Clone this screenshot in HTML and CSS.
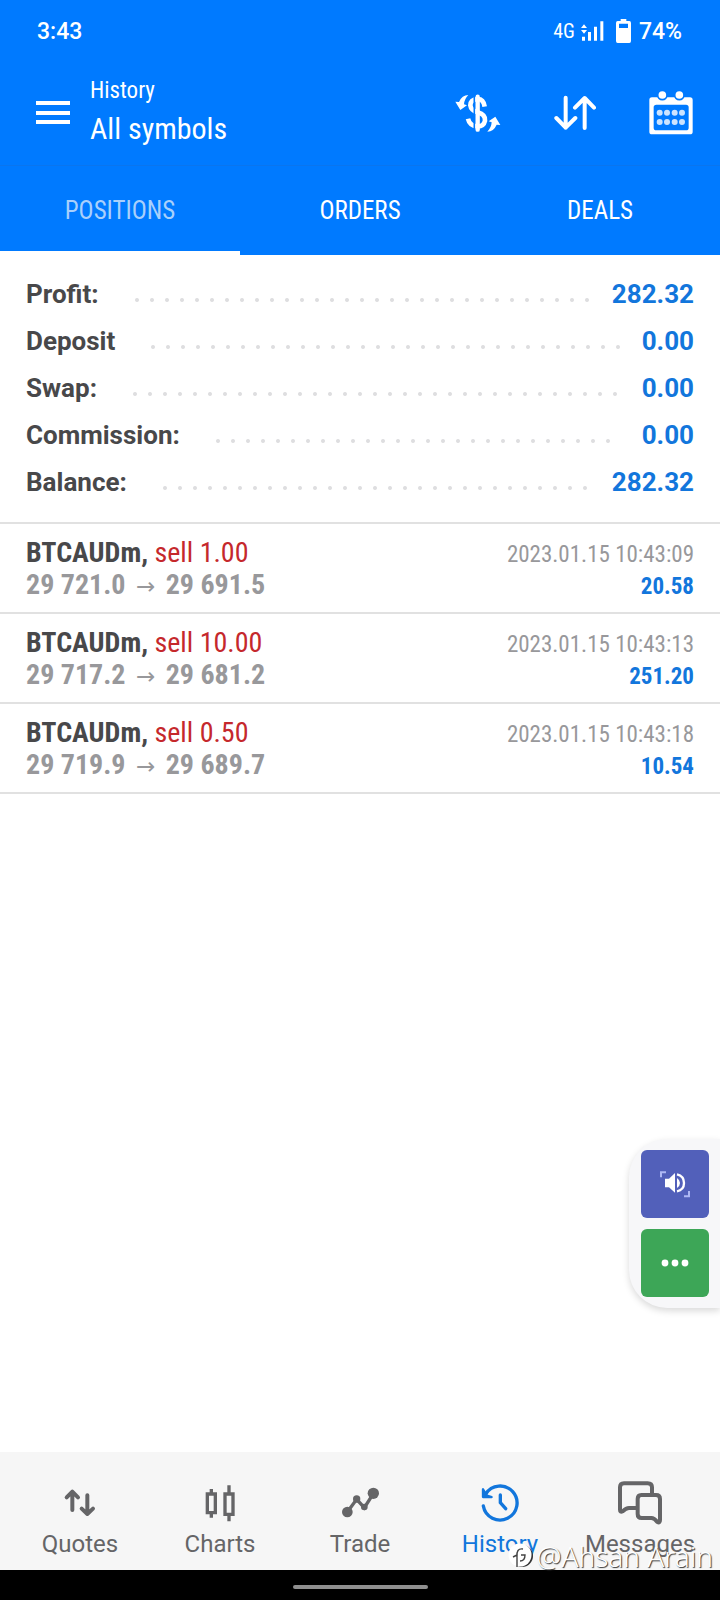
FILE: index.html
```html
<!DOCTYPE html>
<html lang="en">
<head>
<meta charset="utf-8">
<meta name="viewport" content="width=device-width, initial-scale=1">
<title>History</title>
<link rel="stylesheet" href="styles.css">
</head>
<body>
<div class="app">
  <header class="top">
    <div class="status">
      <span class="clock">3:43</span>
      <span class="network">4G</span>
      <svg class="signal" width="23" height="20" viewBox="666 59 69 60" fill="currentColor"><path d="M675 69l9 11h-18zM675 97l9-11h-18zM669 106h9v12h-9zM687 92h9v26h-9zM705 76h9v42h-9zM724 60h9v58h-9z"/></svg>
      <svg class="battery" width="15" height="24" viewBox="768 54 45 72"><path fill="currentColor" fill-rule="evenodd" d="M782 54h17v6h9q5 0 5 6v54q0 6-5 6h-35q-5 0-5-6V66q0-6 5-6h9zM777 68v13h27V68z"/></svg>
      <span class="percent">74%</span>
    </div>
    <div class="bar">
      <button class="icon-button menu" aria-label="Menu"><svg width="34" height="24" viewBox="0 0 34 24" fill="currentColor"><path d="M0 0h34v4H0zM0 10h34v4H0zM0 19h34v4H0z"/></svg></button>
      <div class="heading">
        <p class="section">History</p>
        <h1 class="filter">All symbols</h1>
      </div>
      <div class="actions">
        <button class="icon-button" aria-label="Currency">
          <svg width="46" height="38" viewBox="284 280 138 114"><g fill="none" stroke="currentColor"><path stroke-width="14" d="M373 318Q370 295 352 295Q330 297 330 314Q332 330 352 335Q376 342 374 360Q370 377 352 377Q328 376 323 354"/><path class="cut" stroke-width="5" d="M342 284V390"/><path stroke-width="13" stroke-linecap="round" d="M352 288V387"/></g><path fill="currentColor" d="M285 303L296 304Q305 283 324 283Q312 295 311 311L320 314L300 328ZM420 373L409 372Q400 393 381 393Q393 381 394 365L385 362L405 348Z"/></svg>
        </button>
        <button class="icon-button" aria-label="Sort">
          <svg width="42" height="36" viewBox="580 284 126 108" fill="none" stroke="currentColor" stroke-width="12" stroke-linecap="round" stroke-linejoin="round"><path d="M615 292V382M587 353L615 382L644 353M672 383V293M643 322L672 293L700 322"/></svg>
        </button>
        <button class="icon-button" aria-label="Select period">
          <svg width="44" height="44" viewBox="866 269 132 132" fill="currentColor"><path fill-rule="evenodd" d="M875 288H989Q997 288 997 296V391Q997 399 989 399H875Q867 399 867 391V296Q867 288 875 288ZM888 310Q880 310 880 318V379Q880 387 888 387H977Q985 387 985 379V318Q985 310 977 310Z"/><g class="rings"><circle cx="906" cy="281" r="14"/><circle cx="957" cy="281" r="14"/></g><g class="days"><circle cx="898" cy="334" r="9"/><circle cx="920" cy="334" r="9"/><circle cx="943" cy="334" r="9"/><circle cx="965" cy="334" r="9"/><circle cx="898" cy="362" r="9"/><circle cx="920" cy="362" r="9"/><circle cx="943" cy="362" r="9"/><circle cx="965" cy="362" r="9"/></g></svg>
        </button>
      </div>
    </div>
    <nav class="tabs">
      <button class="tab current" aria-current="true">POSITIONS</button>
      <button class="tab">ORDERS</button>
      <button class="tab">DEALS</button>
    </nav>
  </header>

  <main class="content">
    <dl class="summary">
      <div class="total"><dt>Profit:</dt><dd>282.32</dd></div>
      <div class="total"><dt>Deposit</dt><dd>0.00</dd></div>
      <div class="total"><dt>Swap:</dt><dd>0.00</dd></div>
      <div class="total"><dt>Commission:</dt><dd>0.00</dd></div>
      <div class="total"><dt>Balance:</dt><dd>282.32</dd></div>
    </dl>
    <ul class="positions">
      <li class="position">
        <div class="line"><span class="symbol">BTCAUDm, <span class="side">sell 1.00</span></span><time class="time">2023.01.15 10:43:09</time></div>
        <div class="line"><span class="prices">29 721.0 <span class="arrow">→</span> 29 691.5</span><span class="profit">20.58</span></div>
      </li>
      <li class="position">
        <div class="line"><span class="symbol">BTCAUDm, <span class="side">sell 10.00</span></span><time class="time">2023.01.15 10:43:13</time></div>
        <div class="line"><span class="prices">29 717.2 <span class="arrow">→</span> 29 681.2</span><span class="profit">251.20</span></div>
      </li>
      <li class="position">
        <div class="line"><span class="symbol">BTCAUDm, <span class="side">sell 0.50</span></span><time class="time">2023.01.15 10:43:18</time></div>
        <div class="line"><span class="prices">29 719.9 <span class="arrow">→</span> 29 689.7</span><span class="profit">10.54</span></div>
      </li>
    </ul>
  </main>

  <aside class="floating">
    <button class="tool sound" aria-label="Sound"><svg width="30" height="28" viewBox="180 149 90 84"><path class="corners" d="M183 171V156H198M252 228H267V212"/><path fill="#fff" d="M195 175H207L225 158V217L207 201H195ZM231 173Q240 179 240 188T231 203Z"/><path fill="none" stroke="#fff" stroke-width="7" d="M231 162Q252 167 252 188T231 213"/></svg></button>
    <button class="tool more" aria-label="More"><svg width="28" height="8" viewBox="0 0 28 8" fill="#fff"><circle cx="4" cy="4" r="3.4"/><circle cx="14" cy="4" r="3.4"/><circle cx="24" cy="4" r="3.4"/></svg></button>
  </aside>

  <footer class="bottom">
    <nav class="nav">
      <a class="item" href="#quotes"><svg width="44" height="44" viewBox="176 122 132 132" fill="none" stroke="currentColor" stroke-width="12" stroke-linecap="round" stroke-linejoin="round"><path d="M219 209V154M202 171L219 154L236 171M264 165V221M247 205L264 221L281 205"/></svg>Quotes</a>
      <a class="item" href="#charts"><svg width="44" height="44" viewBox="595 122 132 132" fill="none" stroke="currentColor" stroke-width="10"><path d="M623 161H647V217H623ZM635 146V158M635 220V232M676 161H700V222H676ZM688 135V158M688 225V243"/></svg>Charts</a>
      <a class="item" href="#trade"><svg width="44" height="44" viewBox="1014 122 132 132"><path fill="none" stroke="currentColor" stroke-width="10" d="M1042 215L1070 177L1093 202L1120 160"/><g fill="currentColor"><circle cx="1042" cy="215" r="16"/><circle cx="1070" cy="176" r="11"/><circle cx="1093" cy="200" r="10"/><circle cx="1120" cy="159" r="17"/></g></svg>Trade</a>
      <a class="item active" href="#history" aria-current="page"><svg width="44" height="44" viewBox="355 122 132 132" fill="none" stroke="currentColor" stroke-width="10" stroke-linecap="round"><path d="M371 197A51 51 0 1 0 378 161M422 164V187L438 205"/><path stroke-width="7" fill="currentColor" stroke-linejoin="round" d="M370 147V170H396L382 166Z"/></svg>History</a>
      <a class="item" href="#messages"><svg width="44" height="44" viewBox="773 122 132 132" fill="none" stroke="currentColor" stroke-width="12" stroke-linejoin="round"><path d="M875 158V141Q875 129 862 129H791Q779 129 779 141V208Q779 217 787 213Q797 203 806 203H828M843 164H887Q899 164 899 176V239Q899 249 891 245Q882 233 873 233H844Q832 233 832 221V176Q832 164 843 164Z"/></svg>Messages</a>
    </nav>
    <div class="gesture"><span class="handle"></span></div>
    <div class="watermark"><svg width="26" height="26" viewBox="0 0 26 26"><circle cx="14" cy="13" r="11" fill="#333"/><circle cx="12" cy="12" r="11.5" fill="#fff"/><path d="M9 24V14Q8 5 15 6M5 14L9 12M13 12H17Q17 18 12 18" fill="none" stroke="#444" stroke-width="1.4"/></svg><span>@Ahsan Arain</span></div>
  </footer>
</div>
</body>
</html>
```
FILE: styles.css
```css
* { box-sizing: border-box; }
body {
  margin: 0;
  background: #fff;
  color: #48484a;
  font-family: Roboto, "Liberation Sans", sans-serif;
}
.app { display: flex; flex-direction: column; min-height: 100vh; position: relative; }
button { border: 0; padding: 0; background: none; color: inherit; font: inherit; }
svg { display: block; }

.top { background: #007aff; color: #fff; }
.status { display: flex; align-items: center; height: 60px; padding: 2px 38px 0 37px; font-size: 23px; font-weight: 500; }
.clock { margin-right: auto; }
.network { font-size: 20px; font-family: "Roboto Condensed", Roboto, sans-serif; font-weight: 400; margin-right: 6px; }
.signal { margin-right: 12px; }
.battery { margin-right: 8px; }

.bar { display: flex; align-items: center; height: 106px; padding: 0 27px 0 36px; border-bottom: 1px solid #0a75ee; }
.heading { flex: 1; margin-left: 20px; font-family: "Roboto Condensed", "Liberation Sans Narrow", Roboto, sans-serif; }
.section, .filter { margin: 0; font-weight: 400; }
.section { font-size: 23px; line-height: 32px; }
.filter { font-size: 30px; line-height: 44px; }
.actions { display: flex; align-items: center; gap: 53px; }
.cut { stroke: #007aff; }
.rings { stroke: #007aff; stroke-width: 5; }
.days { opacity: 0.8; }

.tabs { display: flex; }
.tab { flex: 1; height: 89px; padding-top: 4px; border-bottom: 4px solid transparent; font: 25px/32px "Roboto Condensed", "Liberation Sans Narrow", Roboto, sans-serif; }
.tab.current { color: #a9d0fb; border-bottom-color: #fff; }

.content { flex: 1; }
.summary { margin: 0; padding: 15px 26px 17px; border-bottom: 2px solid #e1e1e1; font-size: 26px; font-weight: 700; }
.total { display: flex; align-items: center; height: 47px; }
.total::after {
  content: "";
  order: 1;
  flex: 1;
  height: 4px;
  margin: 12px 20px 0 26px;
  background: radial-gradient(circle at 12px 2px, #dedee0 1.5px, transparent 2.4px) 0 0 / 15px 4px repeat-x;
}
.total:nth-child(4)::after { margin-right: 26px; }
.total dd { order: 2; margin: 0; color: #1276dc; }

.positions { list-style: none; margin: 0; padding: 0; font-family: "Roboto Condensed", "Liberation Sans Narrow", Roboto, sans-serif; }
.position { height: 90px; padding: 13px 26px 0; border-bottom: 2px solid #e1e1e1; }
.line { display: flex; justify-content: space-between; align-items: baseline; height: 32px; line-height: 32px; }
.symbol, .prices { font-size: 28px; font-weight: 700; }
.side { color: #c5282c; font-weight: 400; }
.prices { color: #98989b; }
.arrow { margin: 0 4px; font-family: "Noto Sans", "DejaVu Sans", sans-serif; font-size: 23px; font-weight: 400; }
.time { color: #98989b; font-size: 23px; }
.profit { color: #1276dc; font-size: 23px; font-weight: 700; }

.floating {
  position: absolute;
  right: 0;
  bottom: 292px;
  display: grid;
  gap: 11px;
  padding: 11px 11px 11px 12px;
  background: #f7f7f9;
  border-radius: 38px 0 0 38px;
  box-shadow: 0 3px 7px rgba(0, 0, 0, 0.15);
}
.tool { display: grid; place-items: center; width: 68px; height: 68px; border-radius: 6px; }
.sound { background: #5260ba; }
.more { background: #3da657; }
.corners { fill: none; stroke: #aeb8f4; stroke-width: 6; }

.bottom { position: relative; }
.nav { display: grid; grid-template-columns: repeat(5, 1fr); height: 118px; padding: 29px 10px 0; background: #f6f6f6; }
.item { display: flex; flex-direction: column; align-items: center; gap: 4px; color: #656567; font-size: 24px; line-height: 30px; text-decoration: none; }
.item.active { color: #1276dc; }
.gesture { display: grid; place-items: center; height: 30px; padding-top: 4px; background: #000; }
.handle { width: 135px; height: 4px; border-radius: 2px; background: #8f8f8f; }
.watermark {
  position: absolute;
  right: 7px;
  bottom: 27px;
  display: flex;
  align-items: center;
  gap: 3px;
  color: #fff;
  font: 300 28px/34px "Noto Sans", "Open Sans", sans-serif;
  text-shadow: 1px 1px 1px #333;
}
```
